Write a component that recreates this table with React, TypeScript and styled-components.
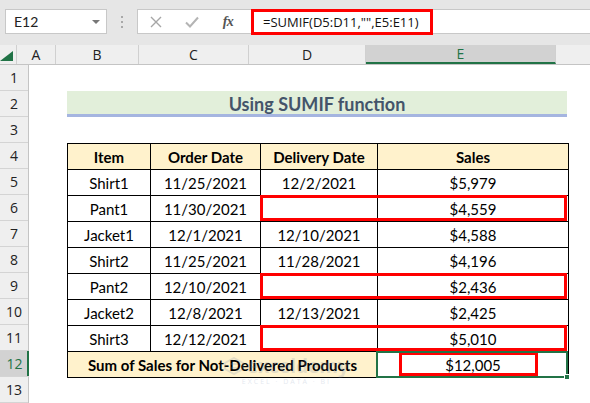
import React from "react";
import styled, { createGlobalStyle } from "styled-components";

const Global = createGlobalStyle`
  html, body { margin: 0; padding: 0; background: #ffffff; }
  body { width: 590px; height: 403px; overflow: hidden; font-family: Lato, "Open Sans", sans-serif; color: #000; }
  * { box-sizing: border-box; }
`;

const Page = styled.div`
  width: 590px;
  height: 403px;
  display: flex;
  flex-direction: column;
  position: relative;
  overflow: hidden;
`;

const Toolbar = styled.div`
  height: 45px;
  background: #e6e6e6;
  display: flex;
  align-items: flex-start;
  padding: 9px 0 0 5px;
  flex-shrink: 0;
`;

const NameBox = styled.div`
  width: 102px;
  height: 25px;
  background: #fff;
  border: 1px solid #c8c8c8;
  display: flex;
  align-items: center;
  justify-content: space-between;
  padding: 0 6px 0 8px;
  font-size: 14px;
  color: #222;
`;

const Caret = styled.span`
  width: 0;
  height: 0;
  border-left: 4px solid transparent;
  border-right: 4px solid transparent;
  border-top: 4px solid #777;
`;

const Dots = styled.div`
  width: 30px;
  height: 25px;
  display: flex;
  flex-direction: column;
  align-items: center;
  justify-content: center;
  gap: 3px;
  & span { width: 2px; height: 2px; background: #a8a8a8; }
`;

const FormulaBar = styled.div`
  flex: 1;
  height: 25px;
  background: #fff;
  border: 1px solid #c8c8c8;
  border-right: none;
  display: flex;
  align-items: center;
`;

const IconSlot = styled.div`
  width: 36px;
  display: flex;
  justify-content: center;
  align-items: center;
`;

const FxLabel = styled.span`
  font-family: "Liberation Serif", serif;
  font-style: italic;
  font-weight: 700;
  font-size: 14px;
  color: #555;
  letter-spacing: -0.5px;
`;

const FormulaBox = styled.div`
  margin-left: 5px;
  height: 26px;
  margin-top: 1px;
  width: 182px;
  border: 3px solid #ff0000;
  display: flex;
  align-items: center;
  padding-left: 9px;
  font-family: "Open Sans", sans-serif;
  font-size: 13px;
  color: #111;
  white-space: nowrap;
`;

const ColHeaderRow = styled.div`
  height: 20px;
  display: flex;
  background: #efefef;
  border-bottom: 1px solid #c4c4c4;
  flex-shrink: 0;
`;

const Corner = styled.div`
  width: 29px;
  border-right: 1px solid #d0d0d0;
  display: flex;
  align-items: flex-end;
  justify-content: flex-end;
  padding: 0 3px 3px 0;
`;

const ColHead = styled.div<{ $w: number; $sel?: boolean }>`
  width: ${(p) => p.$w}px;
  flex-shrink: 0;
  border-right: 1px solid #d0d0d0;
  display: flex;
  align-items: center;
  justify-content: center;
  font-family: "Open Sans", sans-serif;
  font-size: 14px;
  color: ${(p) => (p.$sel ? "#217346" : "#222")};
  background: ${(p) => (p.$sel ? "#d2d2d2" : "transparent")};
  border-bottom: ${(p) => (p.$sel ? "2px solid #217346" : "none")};
`;

const Body = styled.div`
  display: flex;
  flex: 1;
`;

const RowHeaders = styled.div`
  width: 29px;
  flex-shrink: 0;
  display: flex;
  flex-direction: column;
  background: #efefef;
  border-right: 1px solid #c4c4c4;
`;

const RowHead = styled.div<{ $sel?: boolean }>`
  height: 26px;
  flex-shrink: 0;
  border-bottom: 1px solid #d4d4d4;
  display: flex;
  align-items: center;
  justify-content: center;
  font-family: "Open Sans", sans-serif;
  font-size: 14px;
  color: ${(p) => (p.$sel ? "#217346" : "#222")};
  background: ${(p) => (p.$sel ? "#d2d2d2" : "transparent")};
  box-shadow: ${(p) => (p.$sel ? "inset -2px 0 0 #217346" : "none")};
  margin-right: ${(p) => (p.$sel ? "-1px" : "0")};
`;

const Sheet = styled.div`
  flex: 1;
  display: flex;
  flex-direction: column;
  padding-left: 38px;
`;

const EmptyRow = styled.div`
  height: 26px;
  flex-shrink: 0;
`;

const TitleBand = styled.div`
  width: 500px;
  height: 26px;
  flex-shrink: 0;
  background: #e2efda;
  border-bottom: 3px solid #a5b5e0;
  display: flex;
  align-items: center;
  justify-content: center;
  font-weight: 700;
  font-size: 18px;
  color: #44546a;
  padding-top: 2px;
`;

const TableWrap = styled.div`
  position: relative;
  width: 501px;
`;

const Table = styled.table`
  border-collapse: collapse;
  table-layout: fixed;
  width: 501px;
  font-size: 15px;
`;

const Tr = styled.tr`
  height: 26px;
`;

const Td = styled.td<{ $head?: boolean }>`
  border: 1px solid #000;
  text-align: center;
  vertical-align: middle;
  padding: 1px 0 0;
  height: 26px;
  font-weight: ${(p) => (p.$head ? 700 : 400)};
  background: ${(p) => (p.$head ? "#fff2cc" : "#fff")};
  color: #000;
  white-space: nowrap;
`;

const RedBox = styled.div<{ $top: number; $left: number; $w: number; $h: number }>`
  position: absolute;
  top: ${(p) => p.$top}px;
  left: ${(p) => p.$left}px;
  width: ${(p) => p.$w}px;
  height: ${(p) => p.$h}px;
  border: 3px solid #ff0000;
  pointer-events: none;
`;

const Selection = styled.div`
  position: absolute;
  top: 208px;
  left: 309px;
  width: 192px;
  height: 27px;
  border: 2px solid #217346;
  pointer-events: none;
`;

const Handle = styled.div`
  position: absolute;
  right: -4px;
  bottom: -4px;
  width: 6px;
  height: 6px;
  background: #217346;
  border: 1px solid #fff;
`;

const Watermark = styled.div`
  position: absolute;
  left: 224px;
  top: 356px;
  display: flex;
  flex-direction: column;
  align-items: center;
  opacity: 0.18;
  pointer-events: none;
  color: #6a7fa8;
`;

const WmTitle = styled.div`
  display: flex;
  align-items: center;
  gap: 3px;
  font-family: "Open Sans", sans-serif;
  font-weight: 700;
  font-size: 19px;
  line-height: 20px;
`;

const WmSub = styled.div`
  font-family: "Open Sans", sans-serif;
  font-size: 7px;
  letter-spacing: 2px;
  margin-top: 1px;
`;

const cols = [
  { l: "A", w: 39 },
  { l: "B", w: 83 },
  { l: "C", w: 110 },
  { l: "D", w: 117 },
  { l: "E", w: 190, sel: true },
  { l: "", w: 40 },
];

const rows: [string, string, string, string][] = [
  ["Shirt1", "11/25/2021", "12/2/2021", "$5,979"],
  ["Pant1", "11/30/2021", "", "$4,559"],
  ["Jacket1", "12/1/2021", "12/10/2021", "$4,588"],
  ["Shirt2", "11/25/2021", "11/28/2021", "$4,196"],
  ["Pant2", "12/10/2021", "", "$2,436"],
  ["Jacket2", "12/8/2021", "12/13/2021", "$2,425"],
  ["Shirt3", "12/12/2021", "", "$5,010"],
];

export default function App() {
  return (
    <Page>
      <Global />
      <Toolbar>
        <NameBox>
          E12
          <Caret />
        </NameBox>
        <Dots>
          <span />
          <span />
          <span />
        </Dots>
        <FormulaBar>
          <IconSlot>
            <svg width="12" height="12" viewBox="0 0 12 12">
              <path d="M1 1 L11 11 M11 1 L1 11" stroke="#a6a6a6" strokeWidth="1.4" fill="none" />
            </svg>
          </IconSlot>
          <IconSlot>
            <svg width="14" height="12" viewBox="0 0 14 12">
              <path d="M1 6.5 L5 10.5 L13 1.5" stroke="#b4b4b4" strokeWidth="2" fill="none" />
            </svg>
          </IconSlot>
          <IconSlot>
            <FxLabel>fx</FxLabel>
          </IconSlot>
          <FormulaBox>=SUMIF(D5:D11,"",E5:E11)</FormulaBox>
        </FormulaBar>
      </Toolbar>
      <ColHeaderRow>
        <Corner>
          <svg width="13" height="10" viewBox="0 0 13 10">
            <polygon points="13,0 13,10 0,10" fill="#217346" />
          </svg>
        </Corner>
        {cols.map((c, i) => (
          <ColHead key={i} $w={c.w} $sel={c.sel}>
            {c.l}
          </ColHead>
        ))}
      </ColHeaderRow>
      <Body>
        <RowHeaders>
          {Array.from({ length: 13 }, (_, i) => (
            <RowHead key={i} $sel={i === 11}>
              {i + 1}
            </RowHead>
          ))}
        </RowHeaders>
        <Sheet>
          <EmptyRow />
          <TitleBand>Using SUMIF function</TitleBand>
          <EmptyRow />
          <TableWrap>
            <Table>
              <colgroup>
                <col style={{ width: 83 }} />
                <col style={{ width: 110 }} />
                <col style={{ width: 117 }} />
                <col style={{ width: 191 }} />
              </colgroup>
              <tbody>
                <Tr>
                  <Td $head>Item</Td>
                  <Td $head>Order Date</Td>
                  <Td $head>Delivery Date</Td>
                  <Td $head>Sales</Td>
                </Tr>
                {rows.map((r, i) => (
                  <Tr key={i}>
                    {r.map((v, j) => (
                      <Td key={j}>{v}</Td>
                    ))}
                  </Tr>
                ))}
                <Tr>
                  <Td $head colSpan={3}>Sum of Sales for Not-Delivered Products</Td>
                  <Td>$12,005</Td>
                </Tr>
              </tbody>
            </Table>
            <RedBox $top={52} $left={193} $w={307} $h={26} />
            <RedBox $top={130} $left={193} $w={307} $h={26} />
            <RedBox $top={182} $left={193} $w={307} $h={26} />
            <RedBox $top={209} $left={332} $w={139} $h={24} />
            <Selection>
              <Handle />
            </Selection>
          </TableWrap>
        </Sheet>
      </Body>
      <Watermark>
        <WmTitle>
          <svg width="20" height="18" viewBox="0 0 20 18">
            <path d="M10 1 L19 6 L19 12 L10 17 L1 12 L1 6 Z" fill="none" stroke="currentColor" strokeWidth="2" />
            <path d="M6 7 L14 7 M6 11 L14 11" stroke="currentColor" strokeWidth="2" />
          </svg>
          exceldemy
        </WmTitle>
        <WmSub>EXCEL · DATA · BI</WmSub>
      </Watermark>
    </Page>
  );
}
